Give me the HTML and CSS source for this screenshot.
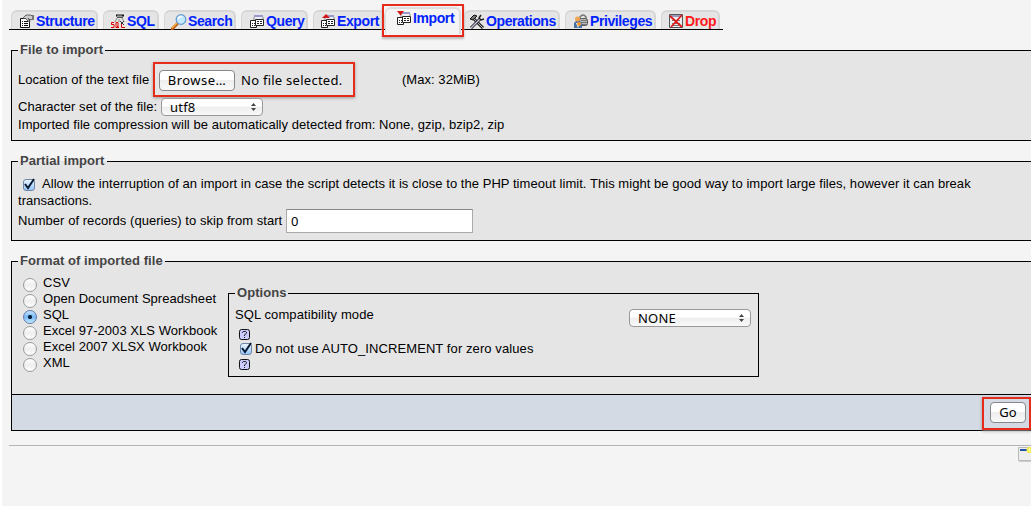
FILE: index.html
```html
<!DOCTYPE html>
<html lang="en">
<head>
<meta charset="utf-8">
<title>Import</title>
<link rel="stylesheet" href="styles.css">
</head>
<body>
<svg width="0" height="0" class="defs">
  <defs>
    <g id="tables">
      <path d="M4 1h9v8H4z" fill="#eeeef8"/><path d="M4 1h9v2H4z" fill="#9999cc"/><path d="M4 3v3M13 3v2" stroke="#888" />
      <path d="M.5 6.500h6v7h-6z" fill="#fff" stroke="#222"/><path d="M2 9.500h3M2 11.500h3" stroke="#222" stroke-dasharray="1 1"/>
      <path d="M5.500 5.500h8v6h-8z" fill="#fff" stroke="#222"/><path d="M7 7.500h5M7 9.500h5" stroke="#222" stroke-dasharray="2 1"/>
    </g>
    <g id="help">
      <rect x=".5" y=".5" width="10" height="10" rx="2" fill="#ccccff" stroke="#111"/>
      <path d="M3.500 4V3.200L4.200 2.500H6.800L7.500 3.200V4.300L5.500 5.800V7M5.500 8v1" fill="none" stroke="#222"/>
    </g>
    <path id="check" d="M3 6l3 4 6-9" fill="none" stroke="#0b1a33" stroke-width="2"/>
  </defs>
</svg>
<nav class="tabs">
  <a class="tab structure"><svg width="15" height="15"><path d="M.5 4.500h9v9h-9z" fill="#fff" stroke="#111"/><path d="M2 7.500h1M4 7.500h4M2 9.500h1M4 9.500h4M2 11.500h1M4 11.500h4" stroke="#111"/><path d="M3 4l3-3 4 0 3 1v3l-3 1-2-2 2 4-2-1-3-3-1 1z" fill="#ccc" stroke="#444" stroke-width=".8"/><path d="M12 1h2v5h-2z" fill="#777"/></svg><span>Structure</span></a>
  <a class="tab sql"><svg width="15" height="15"><path d="M5 1.500h8" stroke="#111" stroke-width="2"/><path d="M6 3.500h6" stroke="#555"/><path d="M6 2h5" stroke="#bbb"/><path d="M6 4L4 8M11 4l2 4M8 5v3" stroke="#888"/><path d="M3 8.500H.5v2H3v3H0M5 8.500h2v5H5zM6 12l2 2M10.500 8v5.500H14" fill="none" stroke="#d00"/><path d="M9 7l4 4M13 7l-3 3" stroke="#333"/></svg><span>SQL</span></a>
  <a class="tab search"><svg width="16" height="16"><path d="M1 15l5-5" stroke="#b75b16" stroke-width="3" stroke-linecap="round"/><path d="M1 14l5-5" stroke="#ffad42" stroke-width="1.500"/><circle cx="10" cy="5.500" r="4.800" fill="#c5e9ff" stroke="#669bcf" stroke-width="1.300"/><path d="M7 5q1-3 4-2" stroke="#fff" stroke-width="1.500" fill="none"/></svg><span>Search</span></a>
  <a class="tab query"><svg width="15" height="15"><use href="#tables"/></svg><span>Query</span></a>
  <a class="tab export"><svg width="15" height="15"><use href="#tables"/><path d="M1 4l4-4 4 4z" fill="#d41818"/></svg><span>Export</span></a>
  <a class="tab import"><svg width="15" height="15"><use href="#tables"/><path d="M0 0h7L3.500 4.500z" fill="#d41818"/></svg><span>Import</span></a>
  <a class="tab operations"><svg width="16" height="16"><path d="M4 4l10 10" stroke="#222" stroke-width="3"/><path d="M5 5l9 9" stroke="#bbb"/><path d="M1 5l4-4 3 1-4 4z" fill="#777" stroke="#111"/><path d="M2 14L11 5" stroke="#222" stroke-width="3"/><path d="M2 14l9-9" stroke="#c6c6e8" stroke-width="1.300"/><path d="M12 1l-2 3 2 2 3-1" fill="none" stroke="#222" stroke-width="1.500"/></svg><span>Operations</span></a>
  <a class="tab privileges"><svg width="15" height="15"><path d="M6 5V3q3-4 6 0v2" fill="none" stroke="#777" stroke-width="1.500"/><rect x="5.500" y="4.500" width="8" height="7" rx="2" fill="#bbb" stroke="#555"/><path d="M7 6.500h6M7 8.500h6M7 10.500h6" stroke="#777"/><path d="M0 14V9l2-2h4l2 3v4z" fill="#496fa6"/><path d="M2 9l2 5 2-5" fill="#fff"/><circle cx="3.500" cy="5" r="2.500" fill="#efa44f"/><circle cx="5" cy="10" r="2" fill="#ff9d2e"/></svg><span>Privileges</span></a>
  <a class="tab drop"><svg width="15" height="15"><path d="M.5.500h13v13H.5z" fill="#eee" stroke="#555"/><path d="M1 2h12" stroke="#9999bb" stroke-width="2"/><path d="M3 6.500h2M6 6.500h5M3 9.500h2M6 9.500h5M3 11.500h7" stroke="#777"/><path d="M1 2l12 11M13 1L2 13" stroke="#e01818" stroke-width="1.700"/></svg><span>Drop</span></a>
</nav>
<form>
  <fieldset class="panel file">
    <legend>File to import</legend>
    <div class="row upload"><label class="location">Location of the text file</label><div class="mark picker"><span class="button browse">Browse…</span><span class="native nofile">No file selected.</span></div><span class="max">(Max: 32MiB)</span></div>
    <div class="row charset"><label>Character set of the file:</label><span class="select"><span>utf8</span><svg width="5" height="8"><path d="M0 3l2.500-3L5 3zM0 5l2.500 3L5 5z" fill="#444"/></svg></span></div>
    <div class="row note"><span class="compression">Imported file compression will be automatically detected from: None, gzip, bzip2, zip</span></div>
  </fieldset>
  <fieldset class="panel partial">
    <legend>Partial import</legend>
    <p class="allow"><span class="checkbox"><svg width="13" height="12"><use href="#check"/></svg></span><span class="allowtext">Allow the interruption of an import in case the script detects it is close to the PHP timeout limit. This might be good way to import large files, however it can break</span><br>transactions.</p>
    <div class="row skip"><label>Number of records (queries) to skip from start</label><span class="input">0</span></div>
  </fieldset>
  <fieldset class="panel format">
    <legend>Format of imported file</legend>
    <div class="columns">
      <ul class="formats">
        <li><i></i>CSV</li><li><i></i>Open Document Spreadsheet</li><li><i class="on"></i>SQL</li><li><i></i>Excel 97-2003 XLS Workbook</li><li><i></i>Excel 2007 XLSX Workbook</li><li><i></i>XML</li>
      </ul>
      <fieldset class="options">
        <legend>Options</legend>
        <div class="row compat"><label>SQL compatibility mode</label><span class="select none"><span>NONE</span><svg width="5" height="8"><path d="M0 3l2.500-3L5 3zM0 5l2.500 3L5 5z" fill="#444"/></svg></span></div>
        <svg class="help" width="11" height="11"><use href="#help"/></svg>
        <div class="row zero"><span class="checkbox"><svg width="13" height="12"><use href="#check"/></svg></span><span>Do not use AUTO_INCREMENT for zero values</span></div>
        <svg class="help" width="11" height="11"><use href="#help"/></svg>
      </fieldset>
    </div>
  </fieldset>
  <div class="footer"><div class="mark submit"><span class="button go">Go</span></div></div>
</form>
<div class="bottom"><svg width="15" height="15"><path d="M.5.500h14v13H.5z" fill="#eee" stroke="#bbb"/><path d="M1 14.500h14" stroke="#ccc"/><path d="M2 3h9" stroke="#2451a3" stroke-width="2"/><circle cx="11.500" cy="3" r="3" fill="#f2ec43"/><path d="M11.500 1v4M9.500 3h4" stroke="#fff9a0"/></svg></div>
</body>
</html>
```
FILE: styles.css
```css
*, *::after { box-sizing: border-box; }
body { margin: 0; width: 1031px; height: 506px; overflow: hidden; background: #f4f4f4; border-left: 2px solid #fff; font: 13px/16px "Liberation Sans", Arial, sans-serif; letter-spacing: .043px; color: #000; white-space: nowrap; }
.defs { display: none; }
svg { display: block; flex: none; }
.tabs { display: flex; align-items: flex-end; gap: 5px; width: 714px; height: 30px; margin-left: 7px; padding-left: 2px; border-bottom: 1px solid #000; }
.tab { display: flex; flex: none; height: 19px; padding: 2px 0 0 9px; border: 2px solid #d6d6d6; border-width: 2px 2px 0 1px; border-radius: 6px 6px 0 0; background: #e5e5e5; color: #0022ff; font-weight: bold; font-size: 14px; line-height: 14px; letter-spacing: -.4px; }
.tab svg { margin-right: 1px; }
.structure { width: 87px; padding-left: 8px; }
.sql { width: 56px; padding-left: 7px; }
.search { width: 72px; padding-left: 6px; }
.query { width: 67px; padding-left: 8px; }
.export { width: 72px; padding-left: 7px; }
.import { position: relative; width: 76px; height: 27px; margin: 0 -2px -5px -5px; padding: 2px 0 0 11px; background: #f4f4f4; border-color: #ddd; }
.import::after { content: ""; position: absolute; left: -4px; top: -5px; width: 82px; height: 33px; border: 2px solid #e62a1c; box-shadow: 0 2px 2px #bbb; }
.operations { width: 96px; padding-left: 4px; }
.privileges { width: 91px; padding-left: 8px; }
.drop { width: 59px; padding-left: 7px; color: #ff1a1a; }
form { width: 1040px; margin: 13px 0 0 9px; }
fieldset { min-width: 0; margin: 0; padding: 0 0 0 6px; border: 1px solid #000; background: #e5e5e5; }
legend { height: 15px; margin: 0; padding: 0 2px; color: #444; font-weight: bold; line-height: 14px; letter-spacing: .05px; }
.row { display: flex; align-items: center; }
.file { height: 98px; }
.upload { height: 35px; margin-top: 4px; }
.location { width: 135px; }
.mark { border: 2px solid #e62a1c; box-shadow: 0 1px 3px #999; }
.picker { display: flex; align-items: center; width: 202px; height: 35px; padding-left: 4px; }
.max { margin-left: 47px; }
.button { display: block; text-align: center; border: 1px solid #888; border-radius: 4px; background: linear-gradient(#fff, #fff 45%, #eee 50%, #f9f9f9); font: 13px/19px "Noto Sans", sans-serif; height: 21px; }
.browse { width: 76px; margin-top: 2px; letter-spacing: .45px; }
.native { margin: 1px 0 0 6px; font: 13px/19px "Noto Sans", sans-serif; letter-spacing: .26px; }
.charset { height: 20px; }
.charset label { width: 143px; }
.select { display: flex; align-items: center; justify-content: space-between; width: 102px; height: 18px; padding: 0 6px 0 8px; border: 1px solid #999; border-radius: 4px; background: linear-gradient(#fff, #fff 45%, #eee 50%, #f9f9f9); font: 13px/16px "Noto Sans", sans-serif; letter-spacing: .2px; }
.note { height: 16px; }
.partial { height: 87px; margin-top: 13px; }
.allow { height: 34px; margin: 6px 0 0; line-height: 17px; }
.checkbox { display: inline-block; width: 12px; height: 12px; border: 1px solid #7085a7; border-radius: 3px; background: linear-gradient(#e9f5ff, #94c8f8); }
.checkbox svg { margin: -2px 0 0 -2px; overflow: visible; }
.allow .checkbox { margin: 0 7px 0 5px; vertical-align: -3px; }
.skip { height: 24px; }
.skip label { width: 268px; }
.input { width: 187px; height: 24px; padding-left: 4px; border: 1px solid #aaa; border-top-color: #888; background: #fff; font: 13px/23px "Noto Sans", sans-serif; }
.format { height: 140px; margin-top: 13px; border-bottom: 0; }
.columns { display: flex; }
.formats { width: 210px; margin: 6px 0 0; padding: 0 0 0 5px; list-style: none; }
.formats li { display: flex; height: 16px; }
.formats i { flex: none; width: 14px; height: 14px; margin: 3px 6px 0 0; border: 1px solid #999; border-radius: 7px; background: linear-gradient(#fff, #eee 50%, #fff); }
.formats .on { background: radial-gradient(circle, #092544 0 1.8px, transparent 2.4px), linear-gradient(#c8e4ff, #75b6f3 50%, #c5eeff); border-color: #6079aa; }
.options { width: 531px; height: 91px; margin-top: 17px; padding-left: 6px; }
.options legend { padding: 0 2px; }
.compat { height: 18px; margin-top: 8px; }
.compat label { width: 394px; margin-top: -7px; letter-spacing: .09px; }
.select.none { width: 122px; }
.help { margin: 2px 0 0 4px; }
.zero { height: 17px; padding-left: 5px; gap: 3px; letter-spacing: .09px; }
.zero .checkbox { flex: none; margin-top: 1px; }
.footer { display: flex; height: 37px; padding: 2px 0 0 970px; border: 1px solid #000; background: #d3dae3; }
.submit { width: 49px; height: 33px; padding: 3px 0 0 6px; }
.go { width: 36px; }
.bottom { height: 20px; margin: 14px 0 0 7px; padding: 1px 0 0 1009px; border-top: 1px solid #b5b5b5; }
```
